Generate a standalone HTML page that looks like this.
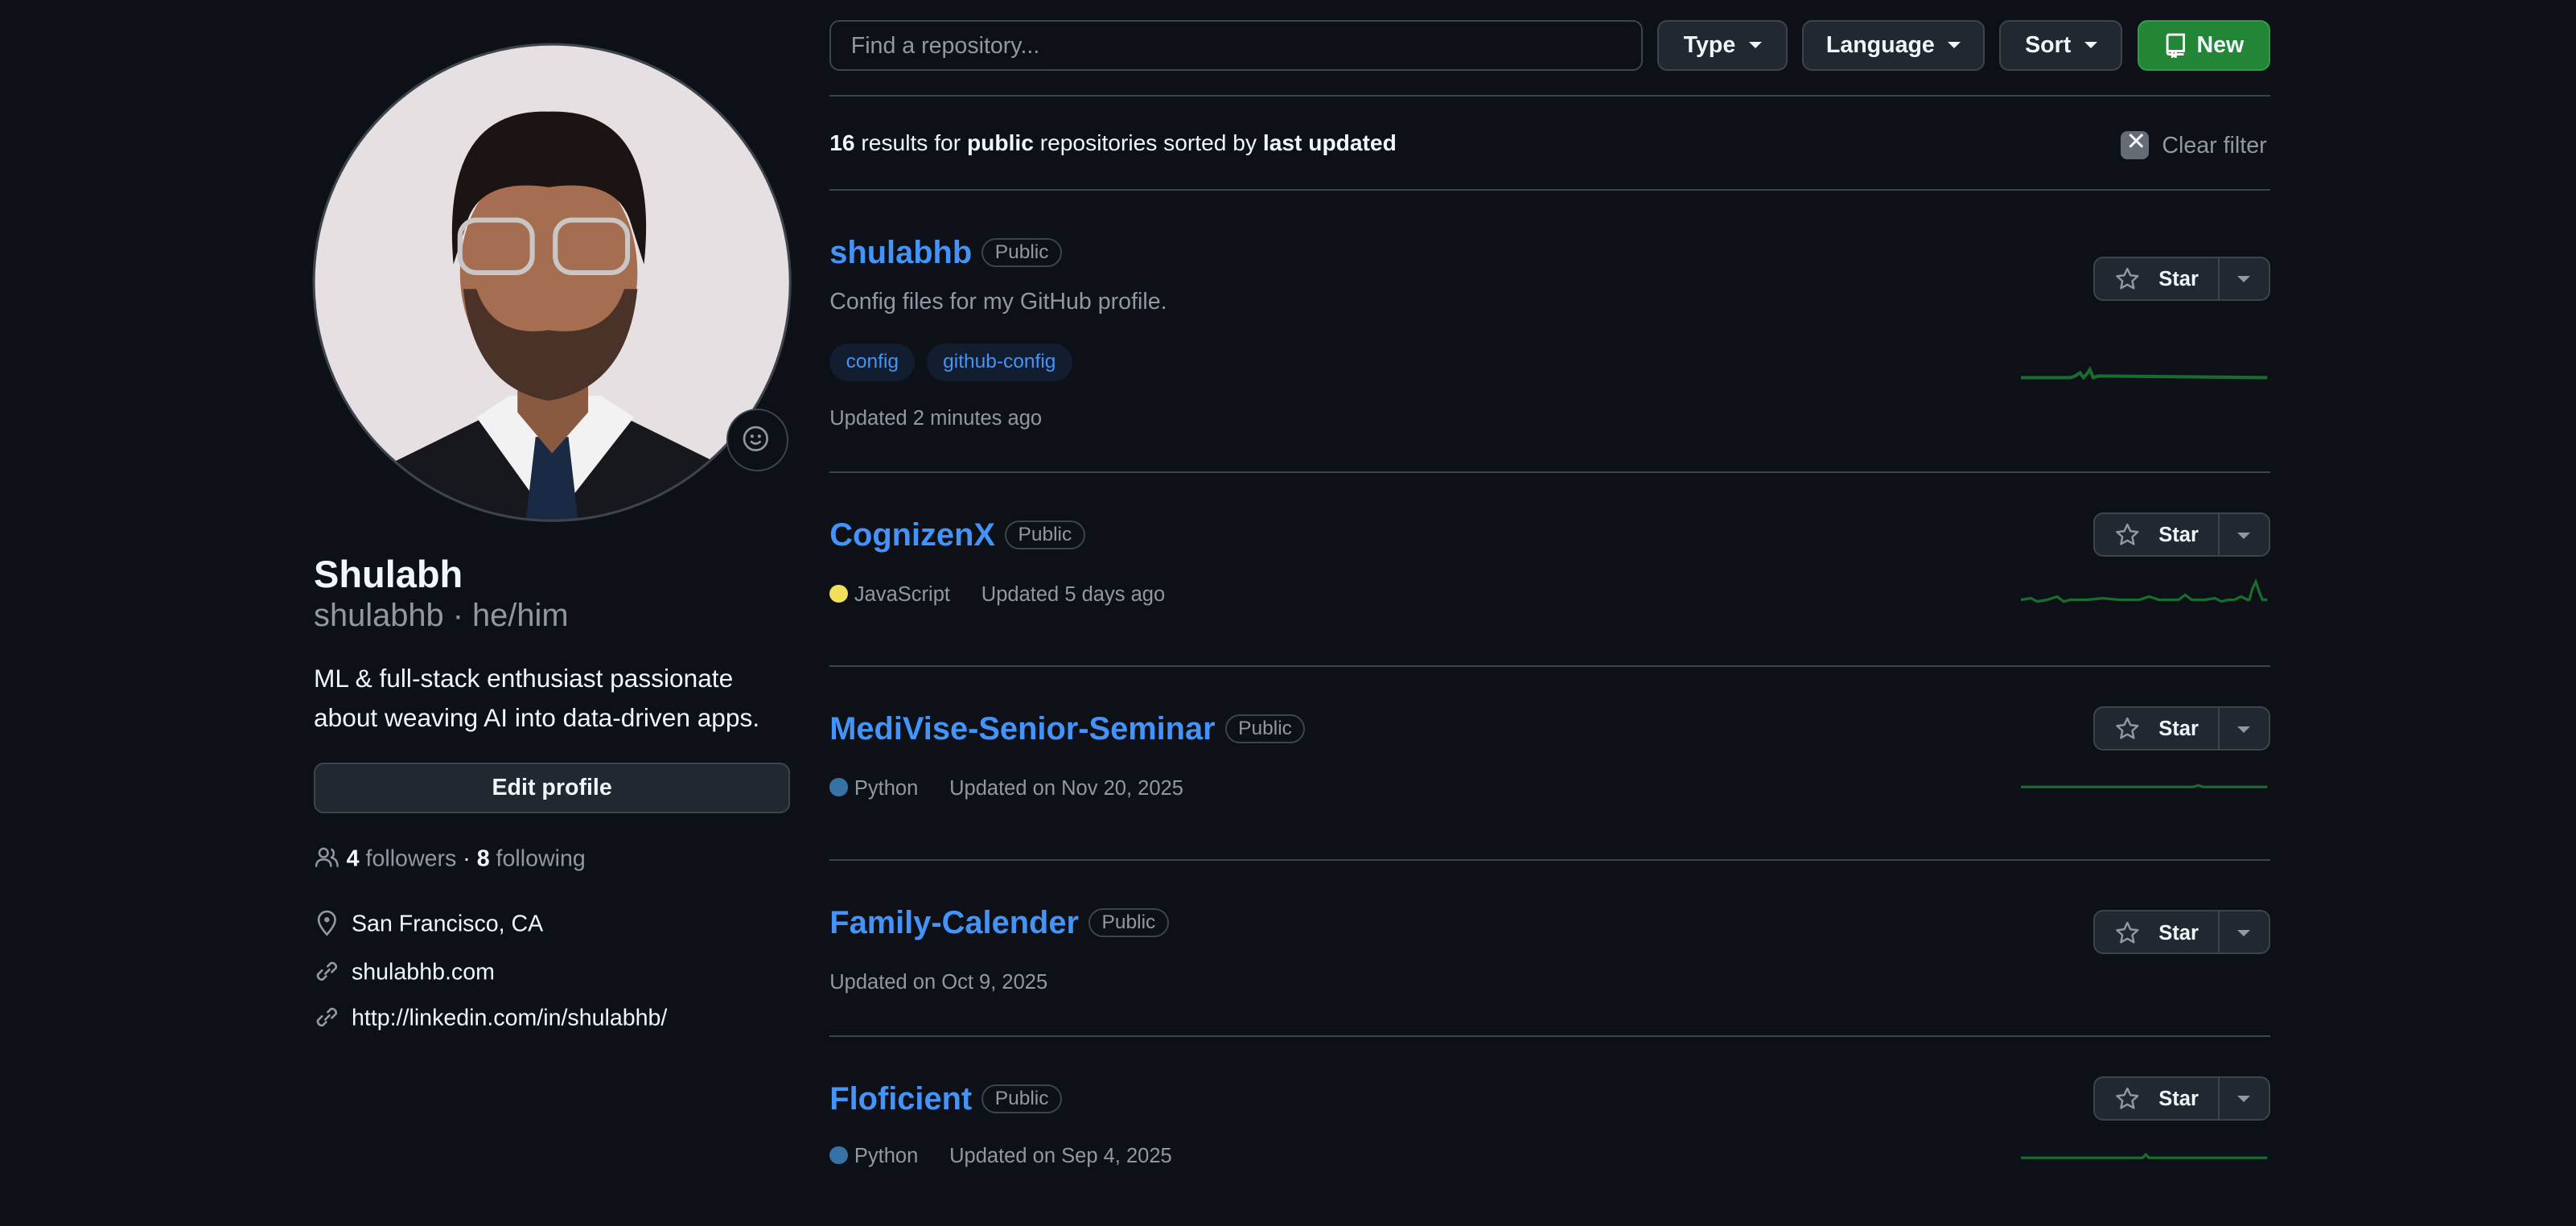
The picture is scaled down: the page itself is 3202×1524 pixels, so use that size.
<!DOCTYPE html>
<html><head><meta charset="utf-8"><style>
html,body{margin:0;padding:0;background:#0d1117;overflow:hidden}
#w{position:relative;width:1568px;height:746px;zoom:2.0421;font-family:"Liberation Sans",sans-serif;color:#f0f6fc}
.a{position:absolute;white-space:nowrap}
.btn{position:absolute;background:#212830;border:1px solid #3d444d;border-radius:6px;box-sizing:border-box;font-size:14px;font-weight:bold;color:#f0f6fc;display:flex;align-items:center;justify-content:center}
.car{display:inline-block;width:0;height:0;border-left:4px solid transparent;border-right:4px solid transparent;border-top:4px solid #f0f6fc;margin-left:8px}
.hr{position:absolute;left:505px;width:877px;height:1px;background:#3d444d}
.title{position:absolute;left:505px;font-size:19.5px;font-weight:bold;color:#4493f8;white-space:nowrap}
.pub{display:inline-block;font-size:12px;font-weight:normal;color:#9198a1;border:1px solid #3d444d;border-radius:12px;padding:1px 7px;vertical-align:3px;margin-left:6px}
.meta{position:absolute;left:505px;font-size:12.5px;color:#9198a1;white-space:nowrap}
.dot{display:inline-block;width:11px;height:11px;border-radius:50%;vertical-align:-1px;margin-right:4px}
.star{position:absolute;left:1274px;width:108px;height:27px;background:#212830;border:1px solid #3d444d;border-radius:6px;box-sizing:border-box;font-size:12.5px;font-weight:bold}
.star .s{position:absolute;left:12px;top:5px}
.star .t{position:absolute;left:39px;top:6px}
.star .d{position:absolute;left:75px;top:0;width:1px;height:25px;background:#3d444d}
.star .c{position:absolute;left:87px;top:11px;border-left:4px solid transparent;border-right:4px solid transparent;border-top:4px solid #9198a1}
.side{position:absolute;left:191px;font-size:14px;color:#f0f6fc;white-space:nowrap}
</style></head><body><div id="w">

<svg class="a" style="left:190px;top:26px" width="292" height="292" viewBox="0 0 292 292">
<defs><clipPath id="cp"><circle cx="146" cy="146" r="145"/></clipPath></defs>
<g clip-path="url(#cp)">
<rect width="292" height="292" fill="#e6e0e3"/>
<path d="M20 292 L40 260 L105 228 L190 228 L255 260 L275 292Z" fill="#16181d"/>
<path d="M100 228 L146 292 L196 228 L176 215 L120 215Z" fill="#f2f2f2"/>
<path d="M136 240 L156 240 L162 292 L130 292Z" fill="#1a2a45"/>
<path d="M125 185 L125 225 L146 250 L168 225 L168 185Z" fill="#8a5a40"/>
<ellipse cx="144" cy="140" rx="54" ry="70" fill="#a56e50"/>
<path d="M92 150 Q98 210 144 218 Q192 210 198 150 L190 150 Q180 180 144 175 Q110 180 100 150Z" fill="#4a3228"/>
<path d="M86 135 Q78 40 144 42 Q212 40 202 135 L194 110 Q186 82 144 88 Q102 82 94 110Z" fill="#1c1412"/>
<rect x="90" y="108" width="44" height="32" rx="10" fill="none" stroke="#c9c6c6" stroke-width="3"/>
<rect x="148" y="108" width="44" height="32" rx="10" fill="none" stroke="#c9c6c6" stroke-width="3"/>
</g>
<circle cx="146" cy="146" r="145" fill="none" stroke="#3d444d" stroke-width="1.5"/>
</svg>
<div class="a" style="left:442px;top:249px;width:36px;height:36px;border-radius:50%;background:#0d1117;border:1px solid #3d444d"></div>
<svg class="a" style="left:452px;top:259px" width="16" height="16" viewBox="0 0 16 16"><circle cx="8" cy="8" r="7" fill="none" stroke="#9198a1" stroke-width="1.3"/><circle cx="5.8" cy="6.5" r="1" fill="#9198a1"/><circle cx="10.2" cy="6.5" r="1" fill="#9198a1"/><path d="M5 9.5 Q8 12.5 11 9.5" fill="none" stroke="#9198a1" stroke-width="1.3"/></svg>

<div class="a" style="left:191px;top:336px;font-size:23px;font-weight:bold">Shulabh</div>
<div class="a" style="left:191px;top:364px;font-size:19.5px;color:#9198a1">shulabhb · he/him</div>
<div class="a" style="left:191px;top:401px;font-size:15.5px;line-height:24px">ML &amp; full-stack enthusiast passionate<br>about weaving AI into data-driven apps.</div>
<div class="btn" style="left:191px;top:464px;width:290px;height:31px">Edit profile</div>
<div class="side" style="top:514px"><svg width="16" height="16" viewBox="0 0 16 16" style="vertical-align:-3px"><circle cx="6" cy="5" r="2.6" fill="none" stroke="#9198a1" stroke-width="1.2"/><path d="M1.5 13.5 Q1.5 9 6 9 Q10.5 9 10.5 13.5" fill="none" stroke="#9198a1" stroke-width="1.2"/><path d="M10.5 2.8 Q12.6 3.5 12 6.4 Q11.5 7.6 10.4 7.8 Q14.5 8.5 14.5 13.5" fill="none" stroke="#9198a1" stroke-width="1.2"/></svg> <b>4</b> <span style="color:#9198a1">followers</span> · <b>8</b> <span style="color:#9198a1">following</span></div>
<div class="side" style="top:554px"><svg width="16" height="16" viewBox="0 0 16 16" style="vertical-align:-3px;margin-right:7px"><path d="M8 15 Q3 9.5 3 6 A5 5 0 0 1 13 6 Q13 9.5 8 15Z" fill="none" stroke="#9198a1" stroke-width="1.3"/><circle cx="8" cy="6" r="1.6" fill="#9198a1"/></svg>San Francisco, CA</div>
<div class="side" style="top:583px"><svg width="16" height="16" viewBox="0 0 16 16" style="vertical-align:-3px;margin-right:7px"><path d="M7 9.5 L9.5 7 M8.5 5 L10.5 3 A2.5 2.5 0 0 1 13.5 6 L11 8.5 M7.5 11 L5.5 13 A2.5 2.5 0 0 1 2.5 10 L5 7.5" fill="none" stroke="#9198a1" stroke-width="1.3" stroke-linecap="round"/></svg>shulabhb.com</div>
<div class="side" style="top:611px"><svg width="16" height="16" viewBox="0 0 16 16" style="vertical-align:-3px;margin-right:7px"><path d="M7 9.5 L9.5 7 M8.5 5 L10.5 3 A2.5 2.5 0 0 1 13.5 6 L11 8.5 M7.5 11 L5.5 13 A2.5 2.5 0 0 1 2.5 10 L5 7.5" fill="none" stroke="#9198a1" stroke-width="1.3" stroke-linecap="round"/></svg>http://linkedin.com/in/shulabhb/</div>

<div class="a" style="left:505px;top:12px;width:495px;height:31px;border:1px solid #3d444d;border-radius:6px;box-sizing:border-box;font-size:14px;color:#9198a1;padding:7px 12px">Find a repository...</div>
<div class="btn" style="left:1009px;top:12px;width:79px;height:31px">Type<span class="car"></span></div>
<div class="btn" style="left:1097px;top:12px;width:111px;height:31px">Language<span class="car"></span></div>
<div class="btn" style="left:1217px;top:12px;width:75px;height:31px">Sort<span class="car"></span></div>
<div class="btn" style="left:1301px;top:12px;width:81px;height:31px;background:#238636;border-color:#2ea043"><svg width="14" height="16" viewBox="0 0 14 16" style="margin-right:6px"><path d="M2 13 V2.5 A1 1 0 0 1 3 1.5 H12 V11.5 H3 A1 1 0 0 0 3 13.5 H5 M7 13.5 H12 M5 11.5 V15 L6 14 L7 15 V11.5" fill="none" stroke="#fff" stroke-width="1.4"/></svg>New</div>
<div class="hr" style="top:58px"></div>
<div class="a" style="left:505px;top:79px;font-size:13.8px"><b>16</b> results for <b>public</b> repositories sorted by <b>last updated</b></div>
<div class="a" style="left:1291px;top:80px;width:17px;height:17px;border-radius:4px;background:#656c76"></div>
<div class="a" style="left:1294px;top:78px;font-size:15px;color:#f0f6fc">✕</div>
<div class="a" style="left:1316px;top:81px;font-size:14px;color:#9198a1">Clear filter</div>
<div class="hr" style="top:115px"></div>

<div class="title" style="top:143px">shulabhb<span class="pub">Public</span></div>
<div class="a" style="left:505px;top:176px;font-size:14px;color:#9198a1">Config files for my GitHub profile.</div>
<div class="a" style="left:505px;top:209px;height:23px;padding:0 10px;border-radius:12px;background:#121d2f;color:#4493f8;font-size:12px;line-height:23px">config</div>
<div class="a" style="left:564px;top:209px;height:23px;padding:0 10px;border-radius:12px;background:#121d2f;color:#4493f8;font-size:12px;line-height:23px">github-config</div>
<div class="meta" style="top:248px">Updated 2 minutes ago</div>
<div class="star" style="top:156px"><svg class="s" width="16" height="16" viewBox="0 0 16 16"><path d="M8 1.5 L9.9 5.5 L14.3 6 L11 9 L11.9 13.4 L8 11.2 L4.1 13.4 L5 9 L1.7 6 L6.1 5.5Z" fill="none" stroke="#9198a1" stroke-width="1.2" stroke-linejoin="round"/></svg><span class="t">Star</span><span class="d"></span><span class="c"></span></div>
<svg class="a" style="left:1230px;top:220px" width="152" height="14"><polyline points="0,10 30,10 33,9 36,7 38,10 40,8 42,5 44,10 47,9 150,10" fill="none" stroke="#196c2e" stroke-width="2"/></svg>
<div class="hr" style="top:287px"></div>

<div class="title" style="top:315px">CognizenX<span class="pub">Public</span></div>
<div class="meta" style="top:355px"><span class="dot" style="background:#f1e05a"></span>JavaScript<span style="margin-left:19px">Updated 5 days ago</span></div>
<div class="star" style="top:312px"><svg class="s" width="16" height="16" viewBox="0 0 16 16"><path d="M8 1.5 L9.9 5.5 L14.3 6 L11 9 L11.9 13.4 L8 11.2 L4.1 13.4 L5 9 L1.7 6 L6.1 5.5Z" fill="none" stroke="#9198a1" stroke-width="1.2" stroke-linejoin="round"/></svg><span class="t">Star</span><span class="d"></span><span class="c"></span></div>
<svg class="a" style="left:1230px;top:350px" width="152" height="20"><polyline points="0,15 6,14 10,16 16,15 22,13 26,16 30,15 40,15 50,14 60,15 72,15 78,13 84,15 90,15 96,15 100,12 104,15 108,15 112,15 118,14 122,16 126,15 130,15 134,13 138,15 139,15 141,8 143,4 145,10 147,15 150,15" fill="none" stroke="#196c2e" stroke-width="1.6"/></svg>
<div class="hr" style="top:405px"></div>

<div class="title" style="top:433px">MediVise-Senior-Seminar<span class="pub">Public</span></div>
<div class="meta" style="top:473px"><span class="dot" style="background:#3572a5"></span>Python<span style="margin-left:19px">Updated on Nov 20, 2025</span></div>
<div class="star" style="top:430px"><svg class="s" width="16" height="16" viewBox="0 0 16 16"><path d="M8 1.5 L9.9 5.5 L14.3 6 L11 9 L11.9 13.4 L8 11.2 L4.1 13.4 L5 9 L1.7 6 L6.1 5.5Z" fill="none" stroke="#9198a1" stroke-width="1.2" stroke-linejoin="round"/></svg><span class="t">Star</span><span class="d"></span><span class="c"></span></div>
<svg class="a" style="left:1230px;top:472px" width="152" height="12"><polyline points="0,7 105,7 108,6 111,7 150,7" fill="none" stroke="#196c2e" stroke-width="1.6"/></svg>
<div class="hr" style="top:523px"></div>

<div class="title" style="top:551px">Family-Calender<span class="pub">Public</span></div>
<div class="meta" style="top:591px">Updated on Oct 9, 2025</div>
<div class="star" style="top:554px"><svg class="s" width="16" height="16" viewBox="0 0 16 16"><path d="M8 1.5 L9.9 5.5 L14.3 6 L11 9 L11.9 13.4 L8 11.2 L4.1 13.4 L5 9 L1.7 6 L6.1 5.5Z" fill="none" stroke="#9198a1" stroke-width="1.2" stroke-linejoin="round"/></svg><span class="t">Star</span><span class="d"></span><span class="c"></span></div>
<div class="hr" style="top:630px"></div>

<div class="title" style="top:658px">Floficient<span class="pub">Public</span></div>
<div class="meta" style="top:697px"><span class="dot" style="background:#3572a5"></span>Python<span style="margin-left:19px">Updated on Sep 4, 2025</span></div>
<div class="star" style="top:655px"><svg class="s" width="16" height="16" viewBox="0 0 16 16"><path d="M8 1.5 L9.9 5.5 L14.3 6 L11 9 L11.9 13.4 L8 11.2 L4.1 13.4 L5 9 L1.7 6 L6.1 5.5Z" fill="none" stroke="#9198a1" stroke-width="1.2" stroke-linejoin="round"/></svg><span class="t">Star</span><span class="d"></span><span class="c"></span></div>
<svg class="a" style="left:1230px;top:698px" width="152" height="12"><polyline points="0,7 74,7 76,5 78,7 150,7" fill="none" stroke="#196c2e" stroke-width="1.6"/></svg>

</div></body></html>
